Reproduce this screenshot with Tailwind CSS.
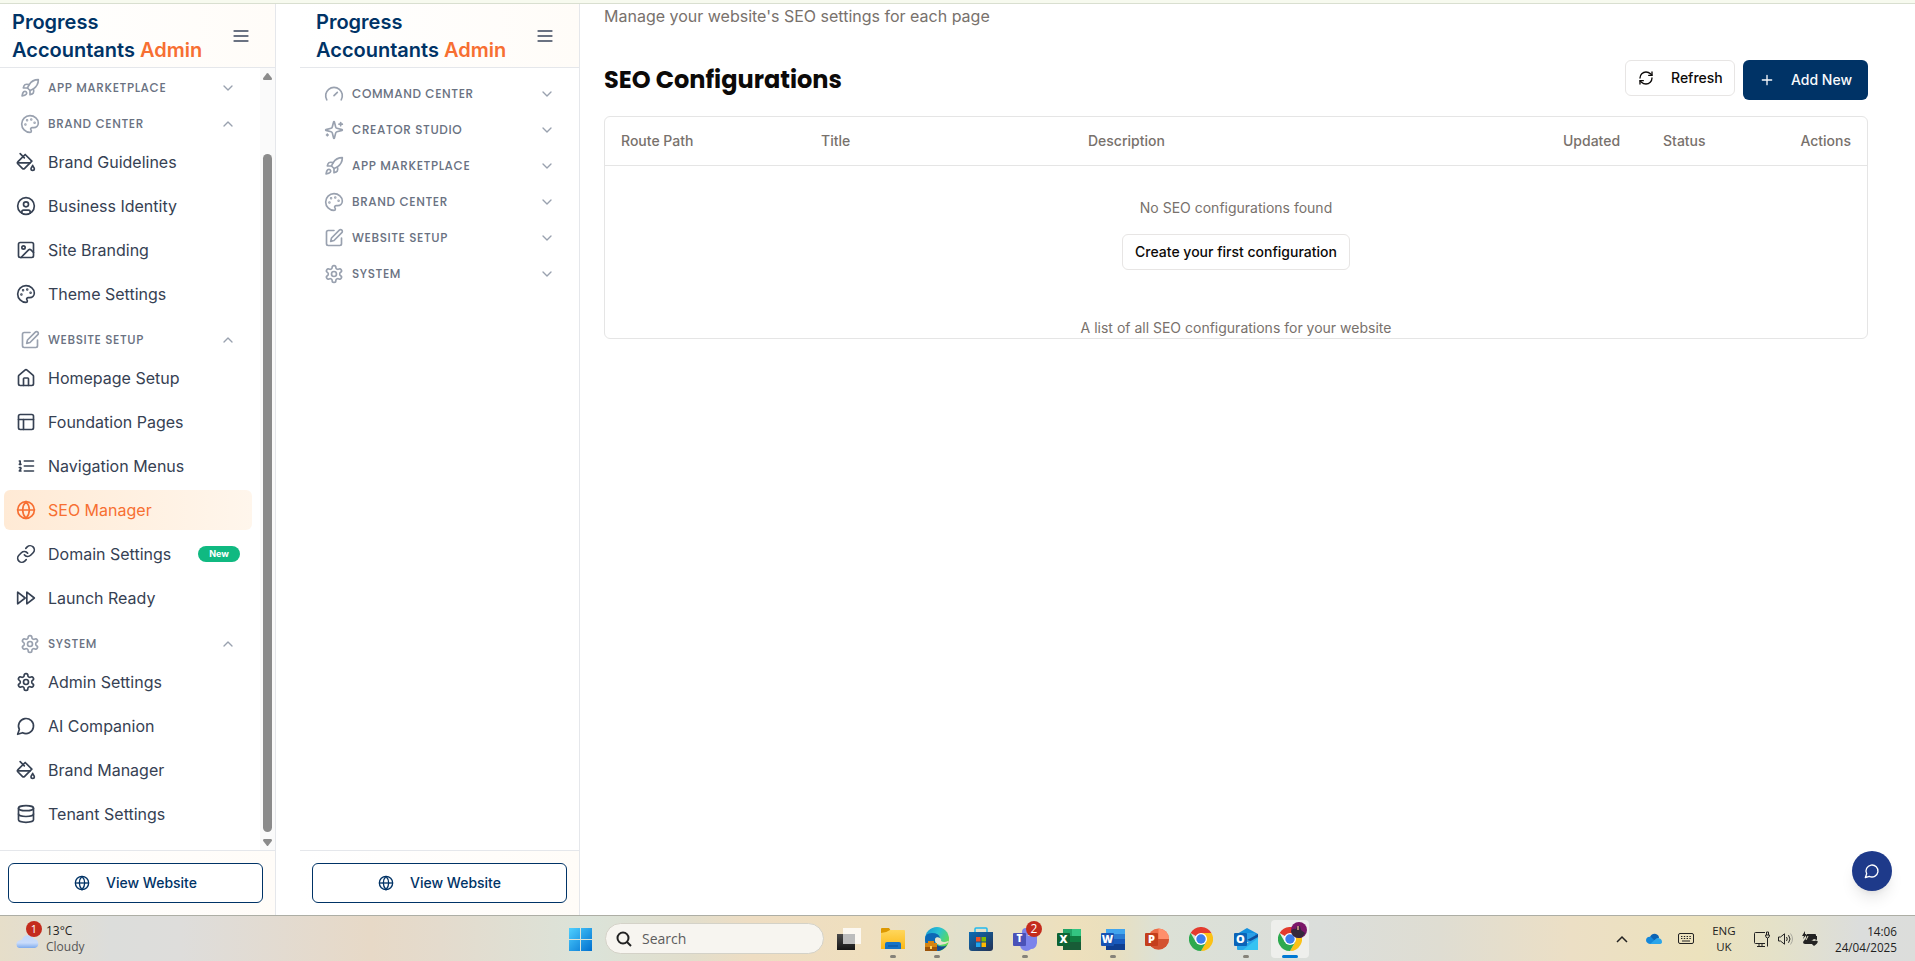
<!DOCTYPE html>
<html lang="en">
<head>
<meta charset="utf-8">
<title>Progress Accountants Admin</title>
<script src="https://cdn.jsdelivr.net/npm/@tailwindcss/browser@4"></script>
</head>
<body class="w-[1915px] h-[961px] overflow-hidden flex flex-col bg-white font-['Inter',sans-serif] text-[#0c0a09]">

<svg class="absolute w-0 h-0">
  <defs>
    <symbol id="rocket" viewBox="0 0 24 24"><path d="M4.5 16.5c-1.5 1.26-2 5-2 5s3.74-.5 5-2c.71-.84.7-2.13-.09-2.91a2.18 2.18 0 0 0-2.91-.09z"/><path d="m12 15-3-3a22 22 0 0 1 2-3.95A12.88 12.88 0 0 1 22 2c0 2.72-.78 7.5-6 11a22.35 22.35 0 0 1-4 2z"/><path d="M9 12H4s.55-3.03 2-4c1.62-1.08 5 0 5 0"/><path d="M12 15v5s3.03-.55 4-2c1.08-1.62 0-5 0-5"/></symbol>
    <symbol id="palette" viewBox="0 0 24 24"><circle cx="13.5" cy="6.5" r=".5" fill="currentColor"/><circle cx="17.5" cy="10.5" r=".5" fill="currentColor"/><circle cx="8.5" cy="7.5" r=".5" fill="currentColor"/><circle cx="6.5" cy="12.5" r=".5" fill="currentColor"/><path d="M12 2C6.5 2 2 6.5 2 12s4.5 10 10 10c.926 0 1.648-.746 1.648-1.688 0-.437-.18-.835-.437-1.125-.29-.289-.438-.652-.438-1.125a1.64 1.64 0 0 1 1.668-1.668h1.996c3.051 0 5.555-2.503 5.555-5.554C21.965 6.012 17.461 2 12 2z"/></symbol>
    <symbol id="bucket" viewBox="0 0 24 24"><path d="m19 11-8-8-8.6 8.6a2 2 0 0 0 0 2.8l5.2 5.2c.8.8 2 .8 2.8 0L19 11Z"/><path d="m5 2 5 5"/><path d="M2 13h15"/><path d="M22 20a2 2 0 1 1-4 0c0-1.6 1.7-2.4 2-4 .3 1.6 2 2.4 2 4Z"/></symbol>
    <symbol id="user" viewBox="0 0 24 24"><circle cx="12" cy="12" r="10"/><circle cx="12" cy="10" r="3"/><path d="M7 20.662V19a2 2 0 0 1 2-2h6a2 2 0 0 1 2 2v1.662"/></symbol>
    <symbol id="image" viewBox="0 0 24 24"><rect width="18" height="18" x="3" y="3" rx="2"/><circle cx="9" cy="9" r="2"/><path d="m21 15-3.086-3.086a2 2 0 0 0-2.828 0L6 21"/></symbol>
    <symbol id="pen" viewBox="0 0 24 24"><path d="M12 3H5a2 2 0 0 0-2 2v14a2 2 0 0 0 2 2h14a2 2 0 0 0 2-2v-7"/><path d="M18.375 2.625a2.121 2.121 0 1 1 3 3L12 15l-4 1 1-4Z"/></symbol>
    <symbol id="home" viewBox="0 0 24 24"><path d="M15 21v-8a1 1 0 0 0-1-1h-4a1 1 0 0 0-1 1v8"/><path d="M3 10a2 2 0 0 1 .709-1.528l7-5.999a2 2 0 0 1 2.582 0l7 5.999A2 2 0 0 1 21 10v9a2 2 0 0 1-2 2H5a2 2 0 0 1-2-2z"/></symbol>
    <symbol id="layout" viewBox="0 0 24 24"><rect width="18" height="18" x="3" y="3" rx="2"/><path d="M3 9h18"/><path d="M9 21V9"/></symbol>
    <symbol id="list" viewBox="0 0 24 24"><path d="M10 12h11"/><path d="M10 18h11"/><path d="M10 6h11"/><path d="M4 10h2"/><path d="M4 6h1v4"/><path d="M6 18H4c0-1 2-2 2-3s-1-1.500-2-1"/></symbol>
    <symbol id="globe" viewBox="0 0 24 24"><circle cx="12" cy="12" r="10"/><path d="M12 2a14.500 14.500 0 0 0 0 20 14.500 14.500 0 0 0 0-20"/><path d="M2 12h20"/></symbol>
    <symbol id="link" viewBox="0 0 24 24"><path d="M10 13a5 5 0 0 0 7.540.54l3-3a5 5 0 0 0-7.070-7.070l-1.720 1.710"/><path d="M14 11a5 5 0 0 0-7.540-.54l-3 3a5 5 0 0 0 7.070 7.070l1.710-1.710"/></symbol>
    <symbol id="forward" viewBox="0 0 24 24"><path d="m13 19 9-7-9-7z"/><path d="m2 19 9-7-9-7z"/></symbol>
    <symbol id="gear" viewBox="0 0 24 24"><path d="M12.220 2h-.44a2 2 0 0 0-2 2v.18a2 2 0 0 1-1 1.730l-.43.25a2 2 0 0 1-2 0l-.15-.08a2 2 0 0 0-2.730.73l-.22.38a2 2 0 0 0 .73 2.730l.15.1a2 2 0 0 1 1 1.720v.51a2 2 0 0 1-1 1.740l-.15.09a2 2 0 0 0-.73 2.730l.22.38a2 2 0 0 0 2.730.73l.15-.08a2 2 0 0 1 2 0l.43.25a2 2 0 0 1 1 1.730V20a2 2 0 0 0 2 2h.44a2 2 0 0 0 2-2v-.18a2 2 0 0 1 1-1.730l.43-.25a2 2 0 0 1 2 0l.15.08a2 2 0 0 0 2.730-.73l.22-.39a2 2 0 0 0-.73-2.730l-.15-.08a2 2 0 0 1-1-1.740v-.5a2 2 0 0 1 1-1.740l.15-.09a2 2 0 0 0 .73-2.730l-.22-.38a2 2 0 0 0-2.730-.73l-.15.08a2 2 0 0 1-2 0l-.43-.25a2 2 0 0 1-1-1.730V4a2 2 0 0 0-2-2z"/><circle cx="12" cy="12" r="3"/></symbol>
    <symbol id="chat" viewBox="0 0 24 24"><path d="M7.900 20A9 9 0 1 0 4 16.100L2 22Z"/></symbol>
    <symbol id="database" viewBox="0 0 24 24"><ellipse cx="12" cy="5" rx="9" ry="3"/><path d="M3 5v14a9 3 0 0 0 18 0V5"/><path d="M3 12a9 3 0 0 0 18 0"/></symbol>
    <symbol id="gauge" viewBox="0 0 24 24"><path d="m12 14 4-4"/><path d="M3.340 19a10 10 0 1 1 17.320 0"/></symbol>
    <symbol id="sparkles" viewBox="0 0 24 24"><path d="M9.937 15.500A2 2 0 0 0 8.500 14.063l-6.135-1.582a.5.5 0 0 1 0-.962L8.500 9.936A2 2 0 0 0 9.937 8.500l1.582-6.135a.5.5 0 0 1 .963 0L14.063 8.500A2 2 0 0 0 15.500 9.937l6.135 1.581a.5.5 0 0 1 0 .964L15.500 14.063a2 2 0 0 0-1.437 1.437l-1.582 6.135a.5.5 0 0 1-.963 0z"/><path d="M20 3v4"/><path d="M22 5h-4"/><path d="M4 17v2"/><path d="M5 18H3"/></symbol>
    <symbol id="down" viewBox="0 0 24 24"><path d="m6 9 6 6 6-6"/></symbol>
    <symbol id="up" viewBox="0 0 24 24"><path d="m18 15-6-6-6 6"/></symbol>
    <symbol id="menu" viewBox="0 0 24 24"><path d="M4 12h16M4 6h16M4 18h16"/></symbol>
    <symbol id="refresh" viewBox="0 0 24 24"><path d="M3 12a9 9 0 0 1 9-9 9.750 9.750 0 0 1 6.740 2.740L21 8"/><path d="M21 3v5h-5"/><path d="M21 12a9 9 0 0 1-9 9 9.750 9.750 0 0 1-6.740-2.740L3 16"/><path d="M8 16H3v5"/></symbol>
    <symbol id="plus" viewBox="0 0 24 24"><path d="M5 12h14M12 5v14"/></symbol>
    <symbol id="chrome" viewBox="0 0 24 24"><path fill="#e33b2e" stroke="none" d="M12 12 1.600 6A12 12 0 0 1 22.400 6z"/><path fill="#fbc116" stroke="none" d="M12 6h10.400A12 12 0 0 1 12 24l5.200-9z"/><path fill="#2da94f" stroke="none" d="M1.600 6A12 12 0 0 0 12 24l5.200-9H6.800z"/><circle cx="12" cy="12" r="6" fill="#fff" stroke="none"/><circle cx="12" cy="12" r="4.700" fill="#3b7ded" stroke="none"/></symbol>
    <linearGradient id="win" gradientUnits="userSpaceOnUse" x1="0" y1="0" x2="23" y2="23"><stop stop-color="#4fd0ff"/><stop offset="1" stop-color="#0070cf"/></linearGradient>
    <linearGradient id="store" x2="1" y2="1"><stop stop-color="#0c6cb4"/><stop offset="1" stop-color="#233153"/></linearGradient>
    <linearGradient id="edge" x2="1" y2=".6"><stop stop-color="#1294d6"/><stop offset=".5" stop-color="#2bc3d2"/><stop offset="1" stop-color="#63dc4c"/></linearGradient>
    <linearGradient id="cloud" x2="0" y2="1"><stop stop-color="#c3d8f8"/><stop offset=".6" stop-color="#c9dcfb"/><stop offset="1" stop-color="#7eabee"/></linearGradient>
    <linearGradient id="folder" x2="0" y2="1"><stop stop-color="#ffd65c"/><stop offset="1" stop-color="#fbb915"/></linearGradient>
    <linearGradient id="dark" x2="0" y2="1"><stop stop-color="#4a4a4a"/><stop offset="1" stop-color="#161616"/></linearGradient>
  </defs>
</svg>

<div class="h-1 shrink-0 bg-[#f7faef] border-b border-[#d9dfd0]"></div>

<div class="flex h-[911px] shrink-0">

  <!-- Primary sidebar -->
  <aside class="w-[276px] shrink-0 flex flex-col border-r border-gray-200">
    <header class="h-16 shrink-0 flex items-center justify-between pl-3 pr-6 border-b border-gray-200 bg-linear-to-r from-white to-[#fffcf8]">
      <h1 class="text-xl leading-7 font-semibold text-[#003366]">Progress<br>Accountants <span class="text-[#f76f32]">Admin</span></h1>
      <svg class="size-5 stroke-gray-500 fill-none stroke-[2.4] [stroke-linecap:round]"><use href="#menu"/></svg>
    </header>
    <div class="flex flex-1 min-h-0">
      <nav class="w-[260px] pt-0.5 pl-1 pr-2 flex flex-col text-base text-gray-700 [stroke-linecap:round] [stroke-linejoin:round]">
        <div class="h-9 flex items-center pl-4 pr-4 text-gray-400"><svg class="size-5 mr-2 fill-none stroke-current stroke-2"><use href="#rocket"/></svg><span class="flex-1 font-['Poppins','Inter',sans-serif] text-xs font-medium tracking-wider text-gray-500">APP MARKETPLACE</span><svg class="size-4 fill-none stroke-current stroke-2"><use href="#down"/></svg></div>
        <div class="h-9 flex items-center pl-4 pr-4 text-gray-400"><svg class="size-5 mr-2 fill-none stroke-current stroke-2"><use href="#palette"/></svg><span class="flex-1 font-['Poppins','Inter',sans-serif] text-xs font-medium tracking-wider text-gray-500">BRAND CENTER</span><svg class="size-4 fill-none stroke-current stroke-2"><use href="#up"/></svg></div>
        <div class="flex flex-col gap-1 mb-2">
          <a class="h-10 flex items-center gap-3 px-3"><svg class="size-5 fill-none stroke-current stroke-2"><use href="#bucket"/></svg>Brand Guidelines</a>
          <a class="h-10 flex items-center gap-3 px-3"><svg class="size-5 fill-none stroke-current stroke-2"><use href="#user"/></svg>Business Identity</a>
          <a class="h-10 flex items-center gap-3 px-3"><svg class="size-5 fill-none stroke-current stroke-2"><use href="#image"/></svg>Site Branding</a>
          <a class="h-10 flex items-center gap-3 px-3"><svg class="size-5 fill-none stroke-current stroke-2"><use href="#palette"/></svg>Theme Settings</a>
        </div>
        <div class="h-9 flex items-center pl-4 pr-4 text-gray-400"><svg class="size-5 mr-2 fill-none stroke-current stroke-2"><use href="#pen"/></svg><span class="flex-1 font-['Poppins','Inter',sans-serif] text-xs font-medium tracking-wider text-gray-500">WEBSITE SETUP</span><svg class="size-4 fill-none stroke-current stroke-2"><use href="#up"/></svg></div>
        <div class="flex flex-col gap-1 mb-2">
          <a class="h-10 flex items-center gap-3 px-3"><svg class="size-5 fill-none stroke-current stroke-2"><use href="#home"/></svg>Homepage Setup</a>
          <a class="h-10 flex items-center gap-3 px-3"><svg class="size-5 fill-none stroke-current stroke-2"><use href="#layout"/></svg>Foundation Pages</a>
          <a class="h-10 flex items-center gap-3 px-3"><svg class="size-5 fill-none stroke-current stroke-2"><use href="#list"/></svg>Navigation Menus</a>
          <a class="h-10 flex items-center gap-3 px-3 rounded-md bg-linear-to-r from-[#ffead5] to-[#fff6ec] text-[#f76f32]"><svg class="size-5 fill-none stroke-current stroke-2"><use href="#globe"/></svg>SEO Manager</a>
          <a class="h-10 flex items-center gap-3 px-3"><svg class="size-5 fill-none stroke-current stroke-2"><use href="#link"/></svg>Domain Settings<span class="ml-auto w-[42px] h-4 rounded-full bg-[#10b981] text-white text-[9px] leading-4 font-bold text-center">New</span></a>
          <a class="h-10 flex items-center gap-3 px-3"><svg class="size-5 fill-none stroke-current stroke-2"><use href="#forward"/></svg>Launch Ready</a>
        </div>
        <div class="h-9 flex items-center pl-4 pr-4 text-gray-400"><svg class="size-5 mr-2 fill-none stroke-current stroke-2"><use href="#gear"/></svg><span class="flex-1 font-['Poppins','Inter',sans-serif] text-xs font-medium tracking-wider text-gray-500">SYSTEM</span><svg class="size-4 fill-none stroke-current stroke-2"><use href="#up"/></svg></div>
        <div class="flex flex-col gap-1">
          <a class="h-10 flex items-center gap-3 px-3"><svg class="size-5 fill-none stroke-current stroke-2"><use href="#gear"/></svg>Admin Settings</a>
          <a class="h-10 flex items-center gap-3 px-3"><svg class="size-5 fill-none stroke-current stroke-2"><use href="#chat"/></svg>AI Companion</a>
          <a class="h-10 flex items-center gap-3 px-3"><svg class="size-5 fill-none stroke-current stroke-2"><use href="#bucket"/></svg>Brand Manager</a>
          <a class="h-10 flex items-center gap-3 px-3"><svg class="size-5 fill-none stroke-current stroke-2"><use href="#database"/></svg>Tenant Settings</a>
        </div>
      </nav>
      <div class="w-[15px] bg-[#fafafa] flex flex-col items-center pt-[5px]">
        <svg class="w-[9px] h-[7px] shrink-0 fill-[#8b8b8b]" viewBox="0 0 9 7"><path d="M3.700.6q.8-1 1.600 0L8.800 5q.6 1.700-.8 2H1Q-.4 6.700.2 5z"/></svg>
        <div class="w-[9px] h-[678px] shrink-0 rounded-full bg-[#8b8b8b] mt-[74px]"></div>
        <svg class="w-[9px] h-[7px] shrink-0 fill-[#8b8b8b] mt-[7px]" viewBox="0 0 9 7"><path d="M3.700 6.400q.8 1 1.600 0L8.800 2Q9.400.3 8 0H1Q-.4.3.2 2z"/></svg>
      </div>
    </div>
    <footer class="h-[65px] shrink-0 border-t border-gray-200 bg-linear-to-r from-white to-[#fffcf8] px-2 pt-3 pr-3">
      <button class="w-full h-10 rounded-md border border-[#003366] bg-white text-[#003366] text-sm font-medium flex items-center justify-center gap-4"><svg class="size-4 fill-none stroke-current stroke-2"><use href="#globe"/></svg>View Website</button>
    </footer>
  </aside>

  <!-- Secondary sidebar -->
  <aside class="ml-6 w-[280px] shrink-0 flex flex-col border-r border-gray-200">
    <header class="h-16 shrink-0 flex items-center justify-between pl-4 pr-6 border-b border-gray-200 bg-linear-to-r from-white to-[#fffcf8]">
      <h1 class="text-xl leading-7 font-semibold text-[#003366]">Progress<br>Accountants <span class="text-[#f76f32]">Admin</span></h1>
      <svg class="size-5 stroke-gray-500 fill-none stroke-[2.4] [stroke-linecap:round]"><use href="#menu"/></svg>
    </header>
    <nav class="flex-1 pt-2 pl-6 pr-6 text-gray-400 [stroke-linecap:round] [stroke-linejoin:round]">
      <div class="h-9 flex items-center"><svg class="size-5 mr-2 fill-none stroke-current stroke-2"><use href="#gauge"/></svg><span class="flex-1 font-['Poppins','Inter',sans-serif] text-xs font-medium tracking-wider text-gray-500">COMMAND CENTER</span><svg class="size-4 fill-none stroke-current stroke-2"><use href="#down"/></svg></div>
      <div class="h-9 flex items-center"><svg class="size-5 mr-2 fill-none stroke-current stroke-2"><use href="#sparkles"/></svg><span class="flex-1 font-['Poppins','Inter',sans-serif] text-xs font-medium tracking-wider text-gray-500">CREATOR STUDIO</span><svg class="size-4 fill-none stroke-current stroke-2"><use href="#down"/></svg></div>
      <div class="h-9 flex items-center"><svg class="size-5 mr-2 fill-none stroke-current stroke-2"><use href="#rocket"/></svg><span class="flex-1 font-['Poppins','Inter',sans-serif] text-xs font-medium tracking-wider text-gray-500">APP MARKETPLACE</span><svg class="size-4 fill-none stroke-current stroke-2"><use href="#down"/></svg></div>
      <div class="h-9 flex items-center"><svg class="size-5 mr-2 fill-none stroke-current stroke-2"><use href="#palette"/></svg><span class="flex-1 font-['Poppins','Inter',sans-serif] text-xs font-medium tracking-wider text-gray-500">BRAND CENTER</span><svg class="size-4 fill-none stroke-current stroke-2"><use href="#down"/></svg></div>
      <div class="h-9 flex items-center"><svg class="size-5 mr-2 fill-none stroke-current stroke-2"><use href="#pen"/></svg><span class="flex-1 font-['Poppins','Inter',sans-serif] text-xs font-medium tracking-wider text-gray-500">WEBSITE SETUP</span><svg class="size-4 fill-none stroke-current stroke-2"><use href="#down"/></svg></div>
      <div class="h-9 flex items-center"><svg class="size-5 mr-2 fill-none stroke-current stroke-2"><use href="#gear"/></svg><span class="flex-1 font-['Poppins','Inter',sans-serif] text-xs font-medium tracking-wider text-gray-500">SYSTEM</span><svg class="size-4 fill-none stroke-current stroke-2"><use href="#down"/></svg></div>
    </nav>
    <footer class="h-[65px] shrink-0 border-t border-gray-200 bg-linear-to-r from-white to-[#fffcf8] px-3 pt-3">
      <button class="w-full h-10 rounded-md border border-[#003366] bg-white text-[#003366] text-sm font-medium flex items-center justify-center gap-4"><svg class="size-4 fill-none stroke-current stroke-2"><use href="#globe"/></svg>View Website</button>
    </footer>
  </aside>

  <!-- SEO manager -->
  <main class="relative flex-1 pl-6 pr-[47px]">
    <p class="text-base leading-6 text-[#78716c]">Manage your website's SEO settings for each page</p>
    <div class="mt-8 h-10 flex items-start">
      <h2 class="flex-1 text-2xl leading-10 font-bold font-['Poppins','Inter',sans-serif]">SEO Configurations</h2>
      <button class="h-9 w-[110px] mr-2 rounded-md border border-[#e7e5e4] flex items-center pl-3 gap-[17px] text-sm font-medium"><svg class="size-4 fill-none stroke-current stroke-2 [stroke-linecap:round] [stroke-linejoin:round]"><use href="#refresh"/></svg>Refresh</button>
      <button class="h-10 w-[125px] rounded-md bg-[#003366] text-[#f8fafc] flex items-center pl-4 gap-4 text-sm font-medium"><svg class="size-4 fill-none stroke-current stroke-2 [stroke-linecap:round]"><use href="#plus"/></svg>Add New</button>
    </div>
    <section class="mt-4 h-[223px] rounded-md border border-[#e5e5e5] text-sm text-[#78716c] flex flex-col items-center">
      <div class="w-full h-[49px] shrink-0 border-b border-[#e5e5e5] grid grid-cols-[200px_267px_475px_100px_1fr_auto] items-center px-4 font-medium">
        <span>Route Path</span><span>Title</span><span>Description</span><span>Updated</span><span>Status</span><span>Actions</span>
      </div>
      <p class="mt-8 leading-5">No SEO configurations found</p>
      <button class="mt-4 h-9 px-3 rounded-md border border-[#e7e5e4] text-[#0c0a09] font-medium">Create your first configuration</button>
      <p class="mt-12 leading-5">A list of all SEO configurations for your website</p>
    </section>
    <button class="absolute right-[23px] bottom-6 size-10 rounded-full bg-[#1e3a8a] text-white shadow-lg flex items-center justify-center"><svg class="size-4 fill-none stroke-current stroke-2 [stroke-linecap:round] [stroke-linejoin:round]"><use href="#chat"/></svg></button>
  </main>
</div>

<!-- Taskbar -->
<footer class="h-[46px] shrink-0 flex items-center border-t border-[#adaea5] bg-[linear-gradient(90deg,#e6dec9_0px,#dcdddb_110px,#dedddb_180px,#e7d9c7_370px,#e4dbcd_440px,#dbe3d9_590px,#e2decc_690px,#eeddc3_750px,#efdfbe_870px,#e2e0cc_960px,#eee0bc_1070px,#eadfbd_1110px,#dce1d6_1160px,#dbdedb_1320px,#dfddd2_1440px,#ecdfc5_1570px,#ece2bd_1700px,#e4e1c9_1780px,#dbdddc_1860px,#dcdddb_1915px)] font-['Segoe_UI','Open_Sans',sans-serif] text-xs text-[#1f1f1f]">
  <div class="relative w-[558px] h-full flex items-center pl-[15px]">
    <svg class="w-6 h-4 mt-0.5" viewBox="0 0 24 16"><path fill="url(#cloud)" d="M4 16A4 4 0 0 1 4 8.500q2 0 3-1A6.500 6.500 0 0 1 19 7a4.600 4.600 0 0 1 1 9z"/></svg>
    <span class="absolute left-[26px] top-[5px] size-4 rounded-full bg-[#c42b1c] text-white text-[11px] leading-4 text-center">1</span>
    <div class="ml-[7px] pt-px leading-4"><div>13°C</div><div class="text-[#555]">Cloudy</div></div>
  </div>
  <div class="w-11 flex justify-center"><svg class="size-[23px] mt-px" viewBox="0 0 23 23" fill="url(#win)"><path d="M0 0h11v11H0zM12 0h11v11H12zM0 12h11v11H0zM12 12h11v11H12z"/></svg></div>
  <div class="ml-[3px] w-[219px] h-[31px] rounded-full bg-[#f7f5f0] border border-[#d4d2c8] flex items-center gap-[10px] pl-[10px] pt-px text-[14px] text-[#5c5c5c]"><svg class="size-4 fill-none stroke-[#222] stroke-2" viewBox="0 0 16 16"><circle cx="7" cy="7" r="5.500"/><path d="m11 11 4 4"/></svg>Search</div>
  <div class="ml-[3px] flex h-full items-center text-white font-bold">
    <div class="w-11 flex justify-center"><svg class="size-6" viewBox="0 0 24 24"><path fill="url(#dark)" d="M0 7h18v16H0z"/><path fill="#fff" fill-opacity=".78" d="M6 1h18v16H6z"/><path fill="#bdbdbd" d="M6 7h12v10H6z"/></svg></div>
    <div class="relative w-11 h-full flex items-center justify-center"><svg class="size-6" viewBox="0 0 24 24"><path fill="#dd9800" d="M0 2q0-1 1-1h7l2 3v3H0z"/><path fill="url(#folder)" d="M0 6q5 0 9-3h14q1 0 1 1v18H0z"/><path fill="#1473c6" d="M4 22v-5q0-2 2-2h12q2 0 2 2v5z"/><path stroke="#0b4f94" d="M7 19h10"/></svg><i class="absolute bottom-[3px] w-1.5 h-[3px] rounded-full bg-[#858279]"></i></div>
    <div class="relative w-11 h-full flex items-center justify-center"><svg class="size-6" viewBox="0 0 24 24"><circle cx="12" cy="12" r="12" fill="url(#edge)"/><path fill="#0d68b6" d="M0 12q0-6 7-6 7 0 8 5-5-2-5 3 1 6 10 6-4 4-8 4Q0 24 0 12z"/><path fill="#e5e2cc" d="M15 11q-5-2-5 2 0 4 5 5 5 0 9-3l-1-1q-4 2-7 0 1-1-1-3z"/><path fill="#134b91" d="M11 18q6 3 11 0-3 5-9 6z"/><path fill="#9c5308" d="M0 16h12v8H0z"/><path fill="#d58411" d="M0 16h12v4H0zM3 14h6v2H3z"/><path fill="#ffd35c" d="M5 19h2v3H5z"/></svg><i class="absolute bottom-[3px] w-1.5 h-[3px] rounded-full bg-[#858279]"></i></div>
    <div class="w-11 flex justify-center"><svg class="size-6" viewBox="0 0 24 24"><path fill="none" stroke="#22b9ee" stroke-width="1.500" d="M6 6V2q0-1 1-1h10q1 0 1 1v4"/><path fill="url(#store)" d="M0 5h24v16q0 3-3 3H3q-3 0-3-3z"/><path fill="#f05125" d="M7 10h4.500v4.500H7z"/><path fill="#7fbb00" d="M12.500 10H17v4.500h-4.500z"/><path fill="#20a5ee" d="M7 15.500h4.500V20H7z"/><path fill="#ffb901" d="M12.500 15.500H17V20h-4.500z"/></svg></div>
    <div class="relative w-11 h-full flex items-center justify-center"><svg class="size-6" viewBox="0 0 24 24"><circle cx="20" cy="7" r="3" fill="#5159be"/><path fill="#7b83eb" d="M7 9h17v7q-1 6-6 6-2 2-5 2-6-1-6-7z"/><circle cx="13" cy="5" r="4" fill="#7b83eb"/><rect y="6" width="13" height="13" rx="1" fill="#4a52b8"/></svg><b class="absolute left-[10px] top-[16px] w-[13px] text-center text-[10px] leading-[13px]">T</b><span class="absolute left-[23px] top-[5px] size-4 rounded-full bg-[#c42b1c] text-xs leading-4 font-normal text-center">2</span><i class="absolute bottom-[3px] w-1.5 h-[3px] rounded-full bg-[#858279]"></i></div>
    <div class="relative w-11 h-full flex items-center justify-center"><svg class="size-6" viewBox="0 0 24 24"><path fill="#21a366" d="M6 2h9v7H6z"/><path fill="#33c481" d="M15 2h9v7h-9z"/><path fill="#107c41" d="M6 9h18v7H6z"/><path fill="#185c37" d="M6 15h18v8H6z"/><path fill="#107c41" d="M15 9h9v6h-9z"/><rect y="6" width="13" height="13" rx="1" fill="#0d6334"/></svg><b class="absolute left-[10px] top-[16px] w-[13px] text-center text-[11px] leading-[13px]">X</b></div>
    <div class="relative w-11 h-full flex items-center justify-center"><svg class="size-6" viewBox="0 0 24 24"><path fill="#41a5ee" d="M5 2h19v6H5z"/><path fill="#2b7cd3" d="M5 7h19v6H5z"/><path fill="#185abd" d="M5 12h19v6H5z"/><path fill="#103f91" d="M5 17h19v6H5z"/><rect y="6" width="13" height="13" rx="1" fill="#1853b3"/></svg><b class="absolute left-[10px] top-[16px] w-[13px] text-center text-[11px] leading-[13px]">W</b><i class="absolute bottom-[3px] w-1.5 h-[3px] rounded-full bg-[#858279]"></i></div>
    <div class="relative w-11 h-full flex items-center justify-center"><svg class="size-6" viewBox="0 0 24 24"><circle cx="13.500" cy="12" r="10.500" fill="#ed6c47"/><path fill="#ff8f6b" d="M13.500 1.500A10.500 10.500 0 0 1 24 12H13.500z"/><path fill="#d35230" d="M3 12h21a10.500 10.500 0 0 1-21 0z"/><rect y="6" width="13" height="13" rx="1" fill="#c43e1c"/></svg><b class="absolute left-[10px] top-[16px] w-[13px] text-center text-[11px] leading-[13px]">P</b></div>
    <div class="w-11 flex justify-center"><svg class="size-6"><use href="#chrome"/></svg></div>
    <div class="relative left-px w-11 h-full flex items-center justify-center"><svg class="size-6" viewBox="0 0 24 24"><path fill="#1490df" d="m3 7 10-6 11 6v5H3z"/><path fill="#2b9fe6" d="M10 6h11v9H10z"/><path fill="#0f4f9c" d="m24 7-11 6 11 3z"/><path fill="#28a8ea" d="M3 22V12l10 4 11-6v12q0 1-1 1H4q-1 0-1-1z"/><path fill="#35c3f2" d="m24 11-15 12h14q1 0 1-1z"/><rect y="6" width="13" height="13" rx="1" fill="#0a64b8"/></svg><b class="absolute left-[10px] top-[16px] w-[13px] text-center text-[11px] leading-[13px]">O</b><i class="absolute bottom-[3px] w-1.5 h-[3px] rounded-full bg-[#858279]"></i></div>
    <div class="relative w-[38px] h-[38px] ml-1 rounded bg-[#eeefec] flex items-center justify-center"><svg class="size-6"><use href="#chrome"/></svg><svg class="absolute left-5 top-0.5 size-4" viewBox="0 0 16 16"><circle cx="8" cy="8" r="8" fill="#7c1769"/><path fill="#35283c" d="M0 9q2-3 5-2l1-3h3l1 4 4 3q-2 5-6 5-7 0-8-7z"/><path fill="#b58478" d="M6 4h2v4H6z"/></svg><i class="absolute bottom-0 w-4 h-[3px] rounded-full bg-[#0078d4]"></i></div>
  </div>
  <div class="ml-auto flex h-full items-center pr-[18px]">
    <svg class="w-3 h-2 mr-[18px] fill-none stroke-[#222] stroke-[1.5]" viewBox="0 0 12 8"><path d="m1 7 5-5 5 5"/></svg>
    <svg class="w-4 h-[11px] mr-4" viewBox="0 0 16 11"><path fill="#0b63b5" d="M4 4q2-4 6-3 3 1 3 4L8 8z"/><path fill="#1487da" d="M4 11q-4-1-4-4 1-4 5-3l7 7z"/><path fill="#2aa5ea" d="M4 11 11 5q5 0 5 4 0 2-3 2z"/></svg>
    <svg class="w-4 h-[11px] mr-[14px] fill-none stroke-[#222]" viewBox="0 0 16 11"><rect x=".5" y=".5" width="15" height="10" rx="1.500"/><path stroke-dasharray="1.400 1.400" d="M3 3.500h10M3 5.500h10"/><path d="M4 8h8"/></svg>
    <div class="w-8 pt-px text-center leading-4 text-[11.500px] mr-[14px]">ENG<br>UK</div>
    <svg class="w-4 h-4 mr-2 fill-none stroke-[#222]" viewBox="0 0 16 16"><path d="M11 1.500H1.500Q.5 1.500.5 2.500v9q0 1 1 1H11M3 15.500h8M5 12.500v3M8 12.500v3M13.500 7v8.500M11.500 4h4q0 3-2 3t-2-3zM12.500 4V1h2v3"/></svg>
    <svg class="w-4 h-3 mr-2 fill-none stroke-[#222]" viewBox="0 0 16 12"><path d="M.5 4h2L6.500.8v10.400L2.500 8h-2zM8.500 4q1.500 2 0 4M10.500 2.200q3 3.800 0 7.600"/><path stroke="#aaa99f" d="M12.500.5q4 5.500 0 11"/></svg>
    <svg class="w-4 h-[15px] mr-[17px]" viewBox="0 0 16 15"><path fill="#222" d="M4 3h9q1 0 1 1v1h1v4l-3-1-3 2 1 3H3q-2 0-2-2l3-4zM3 0 0 5h2L1 8l4-5H3zM12 15q-4-3-3-5 1-1 3 0 2-1 3.500 0 1 2-3.500 5z"/><path stroke="#e5e2ca" d="m6 5-2 4"/></svg>
    <div class="pt-px text-right leading-4 text-[11.700px]">14:06<br>24/04/2025</div>
  </div>
</footer>
</body>
</html>
